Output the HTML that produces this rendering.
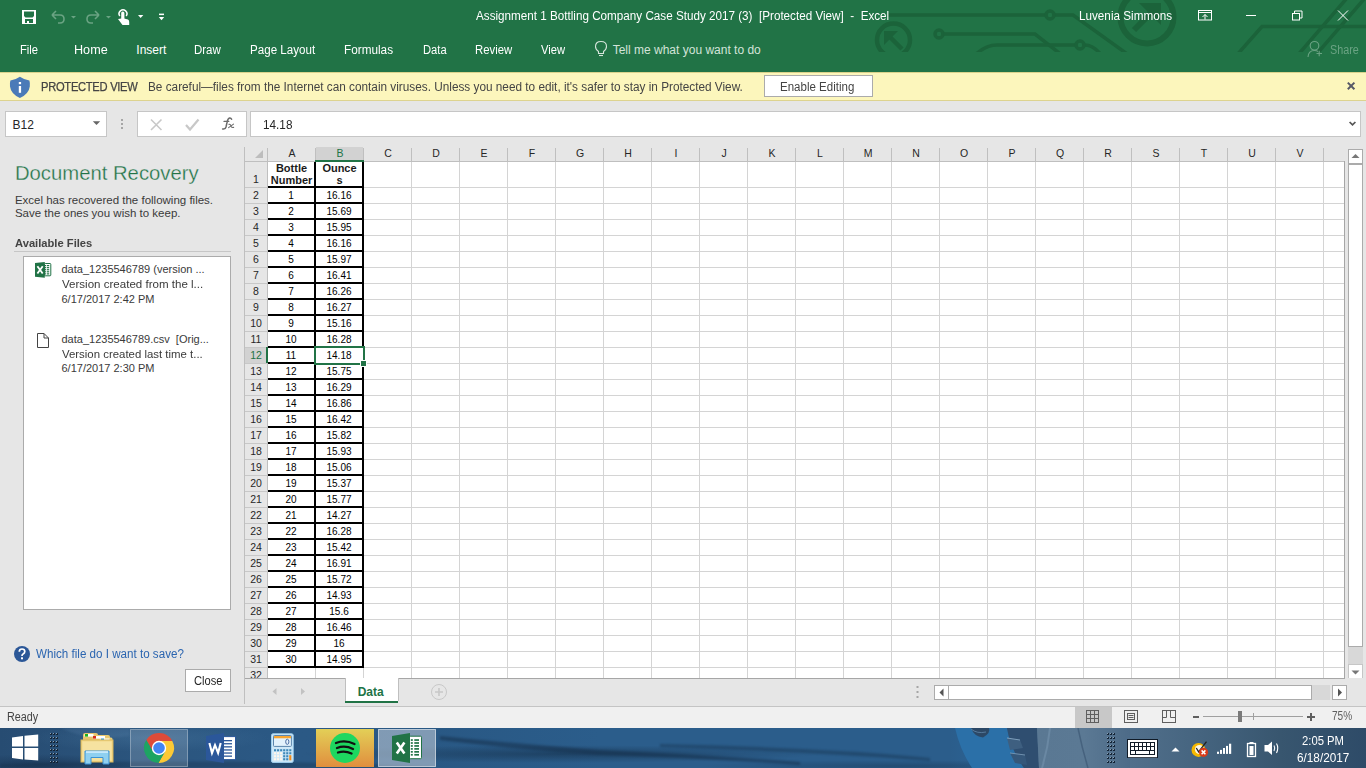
<!DOCTYPE html>
<html><head><meta charset="utf-8"><style>
html,body{margin:0;padding:0;width:1366px;height:768px;overflow:hidden;background:#e6e6e6;position:relative;font-family:"Liberation Sans",sans-serif}
.t{position:absolute;white-space:pre;line-height:1;font-family:"Liberation Sans",sans-serif}
.hc{position:absolute;width:40px;height:14px;text-align:center;font-size:10.5px;line-height:15px}
.hr{position:absolute;left:245px;width:22px;text-align:center;font-size:10.5px;line-height:11px}
.cv{position:absolute;width:46px;height:15px;text-align:center;font-size:10px;line-height:15px;color:#000}
.cb{position:absolute;width:47px;height:26px;text-align:center;font-size:11px;line-height:12.8px;font-weight:bold;color:#1a1a1a}
</style></head><body>
<div style="position:absolute;left:0;top:0;width:1366px;height:72px;background:#217346"></div>
<svg style="position:absolute;left:0;top:0" width="1366" height="52">
<g stroke="#1b633a" stroke-width="3.5" fill="none">
<path d="M888 15 H1045.5 M1054.5 15 H1073 L1130 56"/>
<circle cx="1050" cy="15" r="4"/>
<circle cx="893.5" cy="40" r="16.5" stroke-width="4.5"/>
<path d="M889 36 L902 49" stroke-width="4.5"/>
<path d="M884 31 H898 L884 45 Z" fill="#1b633a" stroke="none"/>
<circle cx="939" cy="34" r="4"/>
<path d="M943.5 34 H1035 L1063 56"/>
<path d="M974 56 Q985 45 997 45 H1075.5 M1084.5 45 Q1094 45 1102 56"/>
<circle cx="1080" cy="45" r="4"/>
<circle cx="1147" cy="17" r="26.5" stroke-width="6"/>
<path d="M1134 30 L1154 10" stroke-width="6"/>
<path d="M1139 3 H1161 V25 Z" fill="#1b633a" stroke="none"/>
<path d="M1236 56 L1262 26.5 H1366"/>
<path d="M1297 56 L1347 -2 M1315 56 L1365 -2"/>
</g></svg>
<svg style="position:absolute;left:0;top:0" width="180" height="32">
<path d="M22 10 H36 V24 H22 Z M24 11.5 V16 L25.5 17.5 H32.5 L34 16 V11.5 Z M25 19 V23 H27 V21 H29 V23 H33 V19 Z" fill="#fff" fill-rule="evenodd"/>
<g fill="none" stroke="#6aa383" stroke-width="1.6">
<path d="M52 15 L56 11 M52 15 L56 19 M52 15 H60 Q64 15 64 19 Q64 23 60 23 H58"/>
<path d="M99 15 L95 11 M99 15 L95 19 M99 15 H91 Q87 15 87 19 Q87 23 91 23 H93"/>
</g>
<path d="M71 16 H76 L73.5 18.5 Z" fill="#6aa383"/>
<path d="M106 16 H111 L108.5 18.5 Z" fill="#6aa383"/>
<g fill="#fff">
<path d="M119.8 16 A3.9 3.9 0 1 1 126.2 16" fill="none" stroke="#fff" stroke-width="1.5"/>
<rect x="121.2" y="11.6" width="3.2" height="10" rx="1.5"/>
<path d="M118 19 L121.5 18.5 L124 18.5 L128 19.5 Q129.3 20.2 129.2 22 V25 H122.5 Z"/>
<path d="M138 15 H143.3 L140.65 18 Z"/>
<rect x="159" y="13.6" width="5" height="1.5"/>
<path d="M158.8 17 H164.2 L161.5 20.2 Z"/>
</g></svg>
<div class="t" style="left:475.5px;top:9.54px;font-size:12px;color:#fff;font-weight:normal;transform:scaleX(0.973);transform-origin:0 0;">Assignment 1 Bottling Company Case Study 2017 (3)&nbsp; [Protected View]&nbsp; -&nbsp; Excel</div>
<div class="t" style="left:1078.5px;top:9.74px;font-size:12px;color:#fff;font-weight:normal;transform:scaleX(0.975);transform-origin:0 0;">Luvenia Simmons</div>
<svg style="position:absolute;left:1180;top:0" width="186" height="32">
<g fill="none" stroke="#fff" stroke-width="1">
<rect x="18.5" y="10.5" width="13" height="9.5"/>
<path d="M18.5 12.5 H31.5"/>
<path d="M25 19.5 V14.5 M22.5 17 L25 14.5 L27.5 17"/>
<path d="M66 15.5 H76"/>
<rect x="112.5" y="13.5" width="7" height="6.5"/>
<path d="M114.5 13.5 V11 H122 V18 H119.5"/>
<path d="M158 10.5 L168 20.5 M168 10.5 L158 20.5"/>
</g></svg>
<div class="t" style="left:20.4px;top:44.04px;font-size:12px;color:#fff;font-weight:normal;transform:scaleX(0.937);transform-origin:0 0;">File</div>
<div class="t" style="left:74.4px;top:44.04px;font-size:12px;color:#fff;font-weight:normal;transform:scaleX(1.052);transform-origin:0 0;">Home</div>
<div class="t" style="left:136.3px;top:44.04px;font-size:12px;color:#fff;font-weight:normal;">Insert</div>
<div class="t" style="left:194.3px;top:44.04px;font-size:12px;color:#fff;font-weight:normal;transform:scaleX(0.954);transform-origin:0 0;">Draw</div>
<div class="t" style="left:250.3px;top:44.04px;font-size:12px;color:#fff;font-weight:normal;transform:scaleX(0.966);transform-origin:0 0;">Page Layout</div>
<div class="t" style="left:344px;top:44.04px;font-size:12px;color:#fff;font-weight:normal;transform:scaleX(0.98);transform-origin:0 0;">Formulas</div>
<div class="t" style="left:422.5px;top:44.04px;font-size:12px;color:#fff;font-weight:normal;transform:scaleX(0.932);transform-origin:0 0;">Data</div>
<div class="t" style="left:475.2px;top:44.04px;font-size:12px;color:#fff;font-weight:normal;transform:scaleX(0.944);transform-origin:0 0;">Review</div>
<div class="t" style="left:540.8px;top:44.04px;font-size:12px;color:#fff;font-weight:normal;transform:scaleX(0.933);transform-origin:0 0;">View</div>
<svg style="position:absolute;left:590px;top:40px" width="20" height="20">
<g fill="none" stroke="#d6e6dc" stroke-width="1.1">
<path d="M8.5 13.5 V11.5 Q5.5 9.5 5.5 6.5 Q5.5 1.5 11 1.5 Q16.5 1.5 16.5 6.5 Q16.5 9.5 13.5 11.5 V13.5 Z"/>
<path d="M9 15.5 H13"/>
</g></svg>
<div class="t" style="left:612.7px;top:44.04px;font-size:12px;color:#d3e3d9;font-weight:normal;">Tell me what you want to do</div>
<svg style="position:absolute;left:1296px;top:36px" width="30" height="26">
<g fill="none" stroke="#6aa383" stroke-width="1.1">
<circle cx="18.5" cy="9.8" r="4.3"/>
<path d="M12 21 Q12.5 14.5 18.5 14.5 Q20.5 14.5 22 15.5"/>
<path d="M20.5 17.5 H26 M23.2 14.8 V20.2"/>
</g></svg>
<div class="t" style="left:1330px;top:44.04px;font-size:12px;color:#6aa383;font-weight:normal;transform:scaleX(0.9);transform-origin:0 0;">Share</div>
<div style="position:absolute;left:0;top:72px;width:1366px;height:28px;background:#fcf6bc;border-bottom:1px solid #ddd38f"></div>
<svg style="position:absolute;left:8px;top:75px" width="26" height="24">
<path d="M11.9 1.8 Q16 4.8 21.4 5.4 Q22.2 8 21.8 11.5 Q20.8 19.2 11.9 22.9 Q3 19.2 2 11.5 Q1.6 8 2.4 5.4 Q7.8 4.8 11.9 1.8 Z" fill="#4a7ab8"/>
<rect x="10.8" y="7" width="2.3" height="2.2" fill="#fff"/>
<rect x="10.8" y="11" width="2.3" height="6.8" fill="#fff"/>
</svg>
<div class="t" style="left:40.5px;top:80.94px;font-size:12px;color:#444;font-weight:normal;transform:scaleX(0.93);transform-origin:0 0;letter-spacing:-0.3px;-webkit-text-stroke:0.25px #444;">PROTECTED VIEW</div>
<div class="t" style="left:147.5px;top:80.94px;font-size:12px;color:#444;font-weight:normal;transform:scaleX(0.982);transform-origin:0 0;">Be careful—files from the Internet can contain viruses. Unless you need to edit, it's safer to stay in Protected View.</div>
<div style="position:absolute;left:764px;top:75px;width:107px;height:20px;background:#fff;border:1px solid #ababab"></div>
<div class="t" style="left:780.2px;top:80.94px;font-size:12px;color:#444;font-weight:normal;transform:scaleX(0.96);transform-origin:0 0;">Enable Editing</div>
<svg style="position:absolute;left:1343px;top:79px" width="14" height="14">
<path d="M4.8 3.6 L11.4 10.2 M11.4 3.6 L4.8 10.2" stroke="#565866" stroke-width="2"/></svg>
<div style="position:absolute;left:0;top:72px;width:1366px;height:1px;background:#d9d28c"></div>
<div style="position:absolute;left:0;top:101px;width:1366px;height:46px;background:#e6e6e6"></div>
<div style="position:absolute;left:5px;top:111px;width:100px;height:24px;background:#fff;border:1px solid #c6c6c6"></div>
<div class="t" style="left:12.5px;top:118.84px;font-size:12px;color:#262626;font-weight:normal;">B12</div>
<svg style="position:absolute;left:90px;top:118px" width="14" height="10"><path d="M2.8 3.2 H10.2 L6.5 6.9 Z" fill="#666"/></svg>
<svg style="position:absolute;left:119px;top:117px" width="6" height="14"><g fill="#a6a6a6"><rect x="2" y="2" width="2" height="2"/><rect x="2" y="6" width="2" height="2"/><rect x="2" y="10" width="2" height="2"/></g></svg>
<div style="position:absolute;left:137px;top:111px;width:108px;height:24px;background:#fff;border:1px solid #c6c6c6"></div>
<svg style="position:absolute;left:137px;top:111px" width="110" height="26">
<path d="M14 8.5 L24.5 19 M24.5 8.5 L14 19" stroke="#c8c8c8" stroke-width="1.6"/>
<path d="M49 14 L53 18.5 L61.5 8.5" stroke="#c8c8c8" stroke-width="2.2" fill="none"/>
</svg>
<svg style="position:absolute;left:218px;top:114px" width="20" height="20">
<g fill="none" stroke="#6b6b6b" stroke-linecap="round">
<path d="M13.6 5.2 Q13 3.8 11.6 4 Q9.8 4.4 9 8.5 L8 13 Q7.3 15.6 4.6 15" stroke-width="1.5"/>
<path d="M6 7.4 H10.8" stroke-width="1.2"/>
<path d="M11 10.3 Q12.3 10 12.8 11.4 L13.3 12.8 Q13.8 13.7 15.6 13.4" stroke-width="1.2"/>
<path d="M15.5 10.1 L10.6 13.6" stroke-width="1.1"/>
</g></svg>
<div style="position:absolute;left:250px;top:111px;width:1109px;height:24px;background:#fff;border:1px solid #c6c6c6"></div>
<div class="t" style="left:262.5px;top:118.84px;font-size:12px;color:#262626;font-weight:normal;transform:scaleX(0.98);transform-origin:0 0;">14.18</div>
<svg style="position:absolute;left:1344px;top:117px" width="14" height="12"><path d="M5.6 5 L8.5 7.9 L11.4 5" stroke="#555" stroke-width="1.7" fill="none"/></svg>
<div style="position:absolute;left:0;top:147px;width:244px;height:559px;background:#e6e6e6"></div>
<div class="t" style="left:14.9px;top:163.42px;font-size:20.3px;color:#217346;font-weight:normal;-webkit-text-stroke:0.3px #e6e6e6;">Document Recovery</div>
<div class="t" style="left:14.9px;top:195.47px;font-size:11.5px;color:#3a3a3a;font-weight:normal;">Excel has recovered the following files.</div>
<div class="t" style="left:14.9px;top:208.47px;font-size:11.5px;color:#3a3a3a;font-weight:normal;">Save the ones you wish to keep.</div>
<div class="t" style="left:14.9px;top:238.03px;font-size:11.3px;color:#444;font-weight:bold;transform:scaleX(0.99);transform-origin:0 0;">Available Files</div>
<div style="position:absolute;left:14px;top:251px;width:217px;height:1px;background:#c6c6c6"></div>
<div style="position:absolute;left:23px;top:256px;width:206px;height:352px;background:#fff;border:1px solid #ababab"></div>
<svg style="position:absolute;left:34px;top:261px" width="18" height="18">
<rect x="10.5" y="2.5" width="6.3" height="12.3" rx="0.8" fill="#fff" stroke="#217346" stroke-width="1"/>
<g fill="#217346"><rect x="11" y="4.00" width="1.2" height="1.2"/><rect x="13" y="4.00" width="2.2" height="1.2"/><rect x="11" y="6.07" width="1.2" height="1.2"/><rect x="13" y="6.07" width="2.2" height="1.2"/><rect x="11" y="8.14" width="1.2" height="1.2"/><rect x="13" y="8.14" width="2.2" height="1.2"/><rect x="11" y="10.21" width="1.2" height="1.2"/><rect x="13" y="10.21" width="2.2" height="1.2"/><rect x="11" y="12.28" width="1.2" height="1.2"/><rect x="13" y="12.28" width="2.2" height="1.2"/></g>
<path d="M1 2 L10.8 1 V16.8 L1 15.75 Z" fill="#217346"/>
<path d="M3.4 5.2 L8.7 12.6 M8.7 5.2 L3.4 12.6" stroke="#fff" stroke-width="1.8"/>
</svg>
<div class="t" style="left:61.5px;top:263.99px;font-size:11px;color:#3a3a3a;font-weight:normal;">data_1235546789 (version ...</div>
<div class="t" style="left:61.5px;top:278.79px;font-size:11px;color:#3a3a3a;font-weight:normal;transform:scaleX(1.05);transform-origin:0 0;">Version created from the l...</div>
<div class="t" style="left:61.5px;top:293.69px;font-size:11px;color:#3a3a3a;font-weight:normal;">6/17/2017 2:42 PM</div>
<svg style="position:absolute;left:35px;top:331px" width="16" height="18">
<path d="M2.5 2.5 H9 L13.5 7 V16.5 H2.5 Z M9 2.5 V7 H13.5" fill="#fff" stroke="#444" stroke-width="1"/></svg>
<div class="t" style="left:61.5px;top:333.89px;font-size:11px;color:#3a3a3a;font-weight:normal;">data_1235546789.csv&nbsp; [Orig...</div>
<div class="t" style="left:61.5px;top:348.79px;font-size:11px;color:#3a3a3a;font-weight:normal;transform:scaleX(1.037);transform-origin:0 0;">Version created last time t...</div>
<div class="t" style="left:61.5px;top:363.39px;font-size:11px;color:#3a3a3a;font-weight:normal;">6/17/2017 2:30 PM</div>
<svg style="position:absolute;left:13px;top:645px" width="18" height="18">
<circle cx="9" cy="9" r="8" fill="#2b5797"/>
<path d="M6.3 6.8 Q6.3 4 9 4 Q11.8 4 11.8 6.6 Q11.8 8.3 9.8 9.2 Q9 9.6 9 11" stroke="#fff" stroke-width="1.7" fill="none"/>
<rect x="8" y="12.3" width="2" height="2" fill="#fff"/>
</svg>
<div class="t" style="left:36.2px;top:647.94px;font-size:12px;color:#2b65b0;font-weight:normal;transform:scaleX(0.968);transform-origin:0 0;">Which file do I want to save?</div>
<div style="position:absolute;left:185px;top:669px;width:44px;height:21px;background:#fff;border:1px solid #ababab"></div>
<div class="t" style="left:194.4px;top:674.84px;font-size:12px;color:#262626;font-weight:normal;transform:scaleX(0.93);transform-origin:0 0;">Close</div>
<div style="position:absolute;left:244px;top:147px;width:1101px;height:531px;background:#fff"></div>
<div style="position:absolute;left:244px;top:147px;width:1101px;height:14px;background:#e6e6e6"></div>
<div style="position:absolute;left:244px;top:147px;width:23px;height:531px;background:#e6e6e6"></div>
<div style="position:absolute;left:316px;top:147px;width:47px;height:14px;background:#d2d2d2"></div>
<div style="position:absolute;left:245px;top:348px;width:22px;height:15px;background:#d2d2d2"></div>
<svg style="position:absolute;left:0;top:0" width="1366" height="768"><rect x="267" y="161" width="1" height="517" fill="#bfbfbf"/><rect x="267" y="148" width="1" height="13" fill="#bfbfbf"/><rect x="315" y="161" width="1" height="517" fill="#d4d4d4"/><rect x="315" y="148" width="1" height="13" fill="#bfbfbf"/><rect x="363" y="161" width="1" height="517" fill="#d4d4d4"/><rect x="363" y="148" width="1" height="13" fill="#bfbfbf"/><rect x="411" y="161" width="1" height="517" fill="#d4d4d4"/><rect x="411" y="148" width="1" height="13" fill="#bfbfbf"/><rect x="459" y="161" width="1" height="517" fill="#d4d4d4"/><rect x="459" y="148" width="1" height="13" fill="#bfbfbf"/><rect x="507" y="161" width="1" height="517" fill="#d4d4d4"/><rect x="507" y="148" width="1" height="13" fill="#bfbfbf"/><rect x="555" y="161" width="1" height="517" fill="#d4d4d4"/><rect x="555" y="148" width="1" height="13" fill="#bfbfbf"/><rect x="603" y="161" width="1" height="517" fill="#d4d4d4"/><rect x="603" y="148" width="1" height="13" fill="#bfbfbf"/><rect x="651" y="161" width="1" height="517" fill="#d4d4d4"/><rect x="651" y="148" width="1" height="13" fill="#bfbfbf"/><rect x="699" y="161" width="1" height="517" fill="#d4d4d4"/><rect x="699" y="148" width="1" height="13" fill="#bfbfbf"/><rect x="747" y="161" width="1" height="517" fill="#d4d4d4"/><rect x="747" y="148" width="1" height="13" fill="#bfbfbf"/><rect x="795" y="161" width="1" height="517" fill="#d4d4d4"/><rect x="795" y="148" width="1" height="13" fill="#bfbfbf"/><rect x="843" y="161" width="1" height="517" fill="#d4d4d4"/><rect x="843" y="148" width="1" height="13" fill="#bfbfbf"/><rect x="891" y="161" width="1" height="517" fill="#d4d4d4"/><rect x="891" y="148" width="1" height="13" fill="#bfbfbf"/><rect x="939" y="161" width="1" height="517" fill="#d4d4d4"/><rect x="939" y="148" width="1" height="13" fill="#bfbfbf"/><rect x="987" y="161" width="1" height="517" fill="#d4d4d4"/><rect x="987" y="148" width="1" height="13" fill="#bfbfbf"/><rect x="1035" y="161" width="1" height="517" fill="#d4d4d4"/><rect x="1035" y="148" width="1" height="13" fill="#bfbfbf"/><rect x="1083" y="161" width="1" height="517" fill="#d4d4d4"/><rect x="1083" y="148" width="1" height="13" fill="#bfbfbf"/><rect x="1131" y="161" width="1" height="517" fill="#d4d4d4"/><rect x="1131" y="148" width="1" height="13" fill="#bfbfbf"/><rect x="1179" y="161" width="1" height="517" fill="#d4d4d4"/><rect x="1179" y="148" width="1" height="13" fill="#bfbfbf"/><rect x="1227" y="161" width="1" height="517" fill="#d4d4d4"/><rect x="1227" y="148" width="1" height="13" fill="#bfbfbf"/><rect x="1275" y="161" width="1" height="517" fill="#d4d4d4"/><rect x="1275" y="148" width="1" height="13" fill="#bfbfbf"/><rect x="1323" y="161" width="1" height="517" fill="#d4d4d4"/><rect x="1323" y="148" width="1" height="13" fill="#bfbfbf"/><rect x="244" y="147" width="1" height="557" fill="#bfbfbf"/><rect x="244" y="161" width="1101" height="1" fill="#bfbfbf"/><rect x="268" y="187" width="1077" height="1" fill="#d4d4d4"/><rect x="245" y="187" width="22" height="1" fill="#c8c8c8"/><rect x="268" y="203" width="1077" height="1" fill="#d4d4d4"/><rect x="245" y="203" width="22" height="1" fill="#c8c8c8"/><rect x="268" y="219" width="1077" height="1" fill="#d4d4d4"/><rect x="245" y="219" width="22" height="1" fill="#c8c8c8"/><rect x="268" y="235" width="1077" height="1" fill="#d4d4d4"/><rect x="245" y="235" width="22" height="1" fill="#c8c8c8"/><rect x="268" y="251" width="1077" height="1" fill="#d4d4d4"/><rect x="245" y="251" width="22" height="1" fill="#c8c8c8"/><rect x="268" y="267" width="1077" height="1" fill="#d4d4d4"/><rect x="245" y="267" width="22" height="1" fill="#c8c8c8"/><rect x="268" y="283" width="1077" height="1" fill="#d4d4d4"/><rect x="245" y="283" width="22" height="1" fill="#c8c8c8"/><rect x="268" y="299" width="1077" height="1" fill="#d4d4d4"/><rect x="245" y="299" width="22" height="1" fill="#c8c8c8"/><rect x="268" y="315" width="1077" height="1" fill="#d4d4d4"/><rect x="245" y="315" width="22" height="1" fill="#c8c8c8"/><rect x="268" y="331" width="1077" height="1" fill="#d4d4d4"/><rect x="245" y="331" width="22" height="1" fill="#c8c8c8"/><rect x="268" y="347" width="1077" height="1" fill="#d4d4d4"/><rect x="245" y="347" width="22" height="1" fill="#c8c8c8"/><rect x="268" y="363" width="1077" height="1" fill="#d4d4d4"/><rect x="245" y="363" width="22" height="1" fill="#c8c8c8"/><rect x="268" y="379" width="1077" height="1" fill="#d4d4d4"/><rect x="245" y="379" width="22" height="1" fill="#c8c8c8"/><rect x="268" y="395" width="1077" height="1" fill="#d4d4d4"/><rect x="245" y="395" width="22" height="1" fill="#c8c8c8"/><rect x="268" y="411" width="1077" height="1" fill="#d4d4d4"/><rect x="245" y="411" width="22" height="1" fill="#c8c8c8"/><rect x="268" y="427" width="1077" height="1" fill="#d4d4d4"/><rect x="245" y="427" width="22" height="1" fill="#c8c8c8"/><rect x="268" y="443" width="1077" height="1" fill="#d4d4d4"/><rect x="245" y="443" width="22" height="1" fill="#c8c8c8"/><rect x="268" y="459" width="1077" height="1" fill="#d4d4d4"/><rect x="245" y="459" width="22" height="1" fill="#c8c8c8"/><rect x="268" y="475" width="1077" height="1" fill="#d4d4d4"/><rect x="245" y="475" width="22" height="1" fill="#c8c8c8"/><rect x="268" y="491" width="1077" height="1" fill="#d4d4d4"/><rect x="245" y="491" width="22" height="1" fill="#c8c8c8"/><rect x="268" y="507" width="1077" height="1" fill="#d4d4d4"/><rect x="245" y="507" width="22" height="1" fill="#c8c8c8"/><rect x="268" y="523" width="1077" height="1" fill="#d4d4d4"/><rect x="245" y="523" width="22" height="1" fill="#c8c8c8"/><rect x="268" y="539" width="1077" height="1" fill="#d4d4d4"/><rect x="245" y="539" width="22" height="1" fill="#c8c8c8"/><rect x="268" y="555" width="1077" height="1" fill="#d4d4d4"/><rect x="245" y="555" width="22" height="1" fill="#c8c8c8"/><rect x="268" y="571" width="1077" height="1" fill="#d4d4d4"/><rect x="245" y="571" width="22" height="1" fill="#c8c8c8"/><rect x="268" y="587" width="1077" height="1" fill="#d4d4d4"/><rect x="245" y="587" width="22" height="1" fill="#c8c8c8"/><rect x="268" y="603" width="1077" height="1" fill="#d4d4d4"/><rect x="245" y="603" width="22" height="1" fill="#c8c8c8"/><rect x="268" y="619" width="1077" height="1" fill="#d4d4d4"/><rect x="245" y="619" width="22" height="1" fill="#c8c8c8"/><rect x="268" y="635" width="1077" height="1" fill="#d4d4d4"/><rect x="245" y="635" width="22" height="1" fill="#c8c8c8"/><rect x="268" y="651" width="1077" height="1" fill="#d4d4d4"/><rect x="245" y="651" width="22" height="1" fill="#c8c8c8"/><rect x="268" y="667" width="1077" height="1" fill="#d4d4d4"/><rect x="245" y="667" width="22" height="1" fill="#c8c8c8"/><rect x="268" y="683" width="1077" height="1" fill="#d4d4d4"/><rect x="245" y="683" width="22" height="1" fill="#c8c8c8"/><path d="M263 150 V158 H255 Z" fill="#bdbdbd"/><rect x="268" y="186" width="96" height="2" fill="#000"/><rect x="268" y="202" width="96" height="2" fill="#000"/><rect x="268" y="218" width="96" height="2" fill="#000"/><rect x="268" y="234" width="96" height="2" fill="#000"/><rect x="268" y="250" width="96" height="2" fill="#000"/><rect x="268" y="266" width="96" height="2" fill="#000"/><rect x="268" y="282" width="96" height="2" fill="#000"/><rect x="268" y="298" width="96" height="2" fill="#000"/><rect x="268" y="314" width="96" height="2" fill="#000"/><rect x="268" y="330" width="96" height="2" fill="#000"/><rect x="268" y="346" width="96" height="2" fill="#000"/><rect x="268" y="362" width="96" height="2" fill="#000"/><rect x="268" y="378" width="96" height="2" fill="#000"/><rect x="268" y="394" width="96" height="2" fill="#000"/><rect x="268" y="410" width="96" height="2" fill="#000"/><rect x="268" y="426" width="96" height="2" fill="#000"/><rect x="268" y="442" width="96" height="2" fill="#000"/><rect x="268" y="458" width="96" height="2" fill="#000"/><rect x="268" y="474" width="96" height="2" fill="#000"/><rect x="268" y="490" width="96" height="2" fill="#000"/><rect x="268" y="506" width="96" height="2" fill="#000"/><rect x="268" y="522" width="96" height="2" fill="#000"/><rect x="268" y="538" width="96" height="2" fill="#000"/><rect x="268" y="554" width="96" height="2" fill="#000"/><rect x="268" y="570" width="96" height="2" fill="#000"/><rect x="268" y="586" width="96" height="2" fill="#000"/><rect x="268" y="602" width="96" height="2" fill="#000"/><rect x="268" y="618" width="96" height="2" fill="#000"/><rect x="268" y="634" width="96" height="2" fill="#000"/><rect x="268" y="650" width="96" height="2" fill="#000"/><rect x="268" y="666" width="96" height="2" fill="#000"/><rect x="314" y="162" width="2" height="506" fill="#000"/><rect x="362" y="162" width="2" height="506" fill="#000"/><rect x="316" y="348" width="47" height="15" fill="#fff"/><rect x="314" y="346" width="51" height="2" fill="#217346"/><rect x="314" y="346" width="2" height="19" fill="#217346"/><rect x="314" y="363" width="46" height="2" fill="#217346"/><rect x="363" y="346" width="2" height="14" fill="#217346"/><rect x="360" y="360" width="7" height="7" fill="#fff"/><rect x="361" y="361" width="5" height="5" fill="#217346"/><rect x="266" y="347" width="2" height="16" fill="#217346"/><rect x="315" y="160" width="49" height="2" fill="#217346"/><rect x="1345" y="161" width="1" height="517" fill="#bfbfbf"/></svg>
<div class="hc" style="left:272.0px;top:146px;color:#262626">A</div>
<div class="hc" style="left:320.0px;top:146px;color:#217346">B</div>
<div class="hc" style="left:368.0px;top:146px;color:#262626">C</div>
<div class="hc" style="left:416.0px;top:146px;color:#262626">D</div>
<div class="hc" style="left:464.0px;top:146px;color:#262626">E</div>
<div class="hc" style="left:512.0px;top:146px;color:#262626">F</div>
<div class="hc" style="left:560.0px;top:146px;color:#262626">G</div>
<div class="hc" style="left:608.0px;top:146px;color:#262626">H</div>
<div class="hc" style="left:656.0px;top:146px;color:#262626">I</div>
<div class="hc" style="left:704.0px;top:146px;color:#262626">J</div>
<div class="hc" style="left:752.0px;top:146px;color:#262626">K</div>
<div class="hc" style="left:800.0px;top:146px;color:#262626">L</div>
<div class="hc" style="left:848.0px;top:146px;color:#262626">M</div>
<div class="hc" style="left:896.0px;top:146px;color:#262626">N</div>
<div class="hc" style="left:944.0px;top:146px;color:#262626">O</div>
<div class="hc" style="left:992.0px;top:146px;color:#262626">P</div>
<div class="hc" style="left:1040.0px;top:146px;color:#262626">Q</div>
<div class="hc" style="left:1088.0px;top:146px;color:#262626">R</div>
<div class="hc" style="left:1136.0px;top:146px;color:#262626">S</div>
<div class="hc" style="left:1184.0px;top:146px;color:#262626">T</div>
<div class="hc" style="left:1232.0px;top:146px;color:#262626">U</div>
<div class="hc" style="left:1280.0px;top:146px;color:#262626">V</div>
<div class="hr" style="top:174.0px;color:#262626">1</div>
<div class="hr" style="top:190.0px;color:#262626">2</div>
<div class="hr" style="top:206.0px;color:#262626">3</div>
<div class="hr" style="top:222.0px;color:#262626">4</div>
<div class="hr" style="top:238.0px;color:#262626">5</div>
<div class="hr" style="top:254.0px;color:#262626">6</div>
<div class="hr" style="top:270.0px;color:#262626">7</div>
<div class="hr" style="top:286.0px;color:#262626">8</div>
<div class="hr" style="top:302.0px;color:#262626">9</div>
<div class="hr" style="top:318.0px;color:#262626">10</div>
<div class="hr" style="top:334.0px;color:#262626">11</div>
<div class="hr" style="top:350.0px;color:#217346">12</div>
<div class="hr" style="top:366.0px;color:#262626">13</div>
<div class="hr" style="top:382.0px;color:#262626">14</div>
<div class="hr" style="top:398.0px;color:#262626">15</div>
<div class="hr" style="top:414.0px;color:#262626">16</div>
<div class="hr" style="top:430.0px;color:#262626">17</div>
<div class="hr" style="top:446.0px;color:#262626">18</div>
<div class="hr" style="top:462.0px;color:#262626">19</div>
<div class="hr" style="top:478.0px;color:#262626">20</div>
<div class="hr" style="top:494.0px;color:#262626">21</div>
<div class="hr" style="top:510.0px;color:#262626">22</div>
<div class="hr" style="top:526.0px;color:#262626">23</div>
<div class="hr" style="top:542.0px;color:#262626">24</div>
<div class="hr" style="top:558.0px;color:#262626">25</div>
<div class="hr" style="top:574.0px;color:#262626">26</div>
<div class="hr" style="top:590.0px;color:#262626">27</div>
<div class="hr" style="top:606.0px;color:#262626">28</div>
<div class="hr" style="top:622.0px;color:#262626">29</div>
<div class="hr" style="top:638.0px;color:#262626">30</div>
<div class="hr" style="top:654.0px;color:#262626">31</div>
<div class="hr" style="top:670.0px;color:#262626">32</div>
<div class="cb" style="left:268px;top:161.5px">Bottle<br>Number</div>
<div class="cb" style="left:316px;top:161.5px">Ounce<br>s</div>
<div class="cv" style="left:268px;top:188px">1</div>
<div class="cv" style="left:316px;top:188px">16.16</div>
<div class="cv" style="left:268px;top:204px">2</div>
<div class="cv" style="left:316px;top:204px">15.69</div>
<div class="cv" style="left:268px;top:220px">3</div>
<div class="cv" style="left:316px;top:220px">15.95</div>
<div class="cv" style="left:268px;top:236px">4</div>
<div class="cv" style="left:316px;top:236px">16.16</div>
<div class="cv" style="left:268px;top:252px">5</div>
<div class="cv" style="left:316px;top:252px">15.97</div>
<div class="cv" style="left:268px;top:268px">6</div>
<div class="cv" style="left:316px;top:268px">16.41</div>
<div class="cv" style="left:268px;top:284px">7</div>
<div class="cv" style="left:316px;top:284px">16.26</div>
<div class="cv" style="left:268px;top:300px">8</div>
<div class="cv" style="left:316px;top:300px">16.27</div>
<div class="cv" style="left:268px;top:316px">9</div>
<div class="cv" style="left:316px;top:316px">15.16</div>
<div class="cv" style="left:268px;top:332px">10</div>
<div class="cv" style="left:316px;top:332px">16.28</div>
<div class="cv" style="left:268px;top:348px">11</div>
<div class="cv" style="left:316px;top:348px">14.18</div>
<div class="cv" style="left:268px;top:364px">12</div>
<div class="cv" style="left:316px;top:364px">15.75</div>
<div class="cv" style="left:268px;top:380px">13</div>
<div class="cv" style="left:316px;top:380px">16.29</div>
<div class="cv" style="left:268px;top:396px">14</div>
<div class="cv" style="left:316px;top:396px">16.86</div>
<div class="cv" style="left:268px;top:412px">15</div>
<div class="cv" style="left:316px;top:412px">16.42</div>
<div class="cv" style="left:268px;top:428px">16</div>
<div class="cv" style="left:316px;top:428px">15.82</div>
<div class="cv" style="left:268px;top:444px">17</div>
<div class="cv" style="left:316px;top:444px">15.93</div>
<div class="cv" style="left:268px;top:460px">18</div>
<div class="cv" style="left:316px;top:460px">15.06</div>
<div class="cv" style="left:268px;top:476px">19</div>
<div class="cv" style="left:316px;top:476px">15.37</div>
<div class="cv" style="left:268px;top:492px">20</div>
<div class="cv" style="left:316px;top:492px">15.77</div>
<div class="cv" style="left:268px;top:508px">21</div>
<div class="cv" style="left:316px;top:508px">14.27</div>
<div class="cv" style="left:268px;top:524px">22</div>
<div class="cv" style="left:316px;top:524px">16.28</div>
<div class="cv" style="left:268px;top:540px">23</div>
<div class="cv" style="left:316px;top:540px">15.42</div>
<div class="cv" style="left:268px;top:556px">24</div>
<div class="cv" style="left:316px;top:556px">16.91</div>
<div class="cv" style="left:268px;top:572px">25</div>
<div class="cv" style="left:316px;top:572px">15.72</div>
<div class="cv" style="left:268px;top:588px">26</div>
<div class="cv" style="left:316px;top:588px">14.93</div>
<div class="cv" style="left:268px;top:604px">27</div>
<div class="cv" style="left:316px;top:604px">15.6</div>
<div class="cv" style="left:268px;top:620px">28</div>
<div class="cv" style="left:316px;top:620px">16.46</div>
<div class="cv" style="left:268px;top:636px">29</div>
<div class="cv" style="left:316px;top:636px">16</div>
<div class="cv" style="left:268px;top:652px">30</div>
<div class="cv" style="left:316px;top:652px">14.95</div>
<div style="position:absolute;left:1345px;top:147px;width:21px;height:531px;background:#e6e6e6"></div>
<div style="position:absolute;left:1348px;top:149px;width:13px;height:13px;background:#fff;border:1px solid #ababab"></div>
<svg style="position:absolute;left:1348px;top:149px" width="15" height="16"><path d="M3.5 9 H11.5 L7.5 5 Z" fill="#777"/></svg>
<div style="position:absolute;left:1348px;top:164px;width:13px;height:481px;background:#fff;border:1px solid #ababab"></div>
<div style="position:absolute;left:1344px;top:161px;width:1px;height:517px;background:#a6a6a6"></div>
<div style="position:absolute;left:1348px;top:647px;width:15px;height:17px;background:#d8d8d8"></div>
<div style="position:absolute;left:1348px;top:664px;width:13px;height:13px;background:#fff;border:1px solid #c6c6c6"></div>
<svg style="position:absolute;left:1348px;top:664px" width="15" height="16"><path d="M3.5 6.5 H11.5 L7.5 10.5 Z" fill="#777"/></svg>
<div style="position:absolute;left:244px;top:678px;width:1122px;height:28px;background:#e6e6e6"></div>
<div style="position:absolute;left:244px;top:678px;width:1101px;height:1px;background:#a6a6a6"></div>
<div style="position:absolute;left:244px;top:678px;width:1px;height:26px;background:#bfbfbf"></div>
<div style="position:absolute;left:345px;top:678px;width:52px;height:23px;background:#fff;border-left:1px solid #bfbfbf;border-right:1px solid #bfbfbf"></div>
<div style="position:absolute;left:345px;top:701px;width:53px;height:2px;background:#217346"></div>
<div class="t" style="left:357.7px;top:685.54px;font-size:12px;color:#217346;font-weight:bold;">Data</div>
<svg style="position:absolute;left:265px;top:682px" width="190" height="22">
<path d="M11.5 6 V13 L7.5 9.5 Z" fill="#c2c2c2"/>
<path d="M36 6 V13 L40 9.5 Z" fill="#c2c2c2"/>
<circle cx="174" cy="10" r="7.5" fill="none" stroke="#c8c8c8" stroke-width="1"/>
<path d="M174 6 V14 M170 10 H178" stroke="#c8c8c8" stroke-width="1.6"/>
</svg>
<svg style="position:absolute;left:914px;top:684px" width="8" height="16"><g fill="#a6a6a6"><rect x="2.5" y="2" width="2" height="2"/><rect x="2.5" y="7" width="2" height="2"/><rect x="2.5" y="12" width="2" height="2"/></g></svg>
<div style="position:absolute;left:934px;top:685px;width:14px;height:13px;background:#fff;border:1px solid #ababab"></div>
<svg style="position:absolute;left:934px;top:685px" width="16" height="15"><path d="M9.5 3.5 V11.5 L5.5 7.5 Z" fill="#555"/></svg>
<div style="position:absolute;left:948px;top:685px;width:362px;height:13px;background:#fff;border:1px solid #ababab"></div>
<div style="position:absolute;left:1312px;top:685px;width:18px;height:15px;background:#d8d8d8"></div>
<div style="position:absolute;left:1332px;top:685px;width:13px;height:13px;background:#fff;border:1px solid #ababab"></div>
<svg style="position:absolute;left:1332px;top:685px" width="16" height="15"><path d="M6 3.5 V11.5 L10 7.5 Z" fill="#555"/></svg>
<div style="position:absolute;left:0;top:706px;width:1366px;height:22px;background:#f0f0f0;border-top:1px solid #c4c4c4"></div>
<div class="t" style="left:7.3px;top:711.14px;font-size:12px;color:#444;font-weight:normal;transform:scaleX(0.9);transform-origin:0 0;">Ready</div>
<div style="position:absolute;left:1075px;top:707px;width:37px;height:21px;background:#c8c8c8"></div>
<svg style="position:absolute;left:1080px;top:706px" width="286" height="22">
<g fill="none" stroke="#5f5f5f" stroke-width="1">
<rect x="6.5" y="4.5" width="12" height="12"/>
<path d="M10.5 4.5 V16.5 M14.5 4.5 V16.5 M6.5 8.5 H18.5 M6.5 12.5 H18.5"/>
<rect x="44.5" y="4.5" width="13" height="12"/>
<rect x="47.5" y="7.5" width="7" height="6"/>
<path d="M48.5 9.5 H53.5 M48.5 11.5 H53.5"/>
<rect x="82.5" y="4.5" width="13" height="12"/>
<path d="M82.5 11.5 H86.5 V4.5 M90.5 4.5 V11.5 H95.5"/>
</g>
<rect x="113" y="10" width="6" height="2" fill="#5f5f5f"/>
<rect x="123" y="10" width="100" height="1" fill="#a0a0a0"/>
<rect x="158" y="5" width="4" height="11" fill="#7a7a7a"/>
<rect x="173" y="7" width="1" height="7" fill="#a0a0a0"/>
<path d="M227 11 H235 M231 7 V15" stroke="#5f5f5f" stroke-width="2"/>
</svg>
<div class="t" style="left:1331.5px;top:710.44px;font-size:12px;color:#5f5f5f;font-weight:normal;transform:scaleX(0.84);transform-origin:0 0;">75%</div>
<div style="position:absolute;left:0;top:728px;width:1366px;height:40px;background:
radial-gradient(ellipse 260px 9px at 560px 26px, rgba(20,45,70,0.55), rgba(20,45,70,0) 100%),
radial-gradient(ellipse 200px 6px at 900px 38px, rgba(20,45,70,0.35), rgba(20,45,70,0) 100%),
radial-gradient(ellipse 120px 14px at 150px 10px, rgba(90,140,180,0.25), rgba(90,140,180,0) 100%),
radial-gradient(ellipse 90px 10px at 40px 36px, rgba(15,35,60,0.4), rgba(15,35,60,0) 100%),
linear-gradient(90deg,#274c72 0px,#2b557e 150px,#2b5985 300px,#295884 430px,#2b5d8b 600px,#2b5d8b 950px,#2b6598 1000px,#4a6a8a 1040px,#5a7893 1075px,#53718d 1120px,#45647f 1200px,#38566f 1280px,#2e4b68 1366px)"></div>
<svg style="position:absolute;left:0;top:728px;filter:blur(1.2px)" width="930" height="40">
<path d="M440 8 Q520 16 600 22 Q700 26 800 34 L800 37 Q700 30 600 27 Q520 22 440 12 Z" fill="rgba(18,40,64,0.45)"/>
<path d="M660 16 Q760 18 860 24 Q900 27 930 30 L930 33 Q880 29 840 27 Q760 22 660 19 Z" fill="rgba(18,40,64,0.35)"/>
<path d="M0 36 Q200 30 430 38 L430 40 L0 40 Z" fill="rgba(18,40,64,0.3)"/>
<path d="M60 0 Q90 14 130 8 L130 0 Z" fill="rgba(120,160,200,0.15)"/>
</svg>
<svg style="position:absolute;left:930px;top:728px;filter:blur(0.6px)" width="200" height="40">
<defs><linearGradient id="rockg" x1="0" y1="0" x2="1" y2="0"><stop offset="0" stop-color="#5a7893"/><stop offset="0.5" stop-color="#5b7994"/><stop offset="1" stop-color="#4d6b88"/></linearGradient></defs>
<path d="M25 0 H77 Q80 20 94 40 H42 Q30 22 25 0 Z" fill="#2b70a8"/>
<path d="M77 0 H107 L109 40 H94 Q80 20 77 0 Z" fill="#2f4e70"/>
<path d="M41 0 H59 Q61 5 53 9.5 Q44 8.5 41 0 Z" fill="#2c4866"/>
<path d="M41 1 Q47 6 56 4" stroke="#5f86aa" stroke-width="0.8" fill="none"/>
<path d="M77 10 L90 12 L93 20 L80 22 Z" fill="#3e5f80"/>
<path d="M77 10 L90 12" stroke="#8fb0cc" stroke-width="0.8"/>
<path d="M80 25 L95 27 L97 37 L85 35 Z" fill="#35577a"/>
<path d="M80 25 L95 27" stroke="#7fa0bd" stroke-width="0.8"/>
<path d="M107 0 H200 V40 H109 Z" fill="url(#rockg)"/>
<path d="M148 0 Q152 20 158 40" stroke="#46627e" stroke-width="1.5" fill="none"/>
<path d="M120 0 Q118 20 112 40" stroke="#6a88a3" stroke-width="2" fill="none"/>
</svg>
<svg style="position:absolute;left:0;top:728px" width="1366" height="40">
<g fill="#fff">
<path d="M12 9.4 L23 8 V18.6 H12 Z M24.5 7.8 L38.2 6.4 V18.6 H24.5 Z M12 20 H23 V31.4 L12 30 Z M24.5 20 H38.2 V32.4 L24.5 31.4 Z"/>
</g>
<g fill="#111"><rect x="50" y="5" width="2" height="2" fill="#142436"/><rect x="50" y="5" width="1" height="1" fill="#8aa0b4"/><rect x="50" y="9" width="2" height="2" fill="#142436"/><rect x="50" y="9" width="1" height="1" fill="#8aa0b4"/><rect x="50" y="13" width="2" height="2" fill="#142436"/><rect x="50" y="13" width="1" height="1" fill="#8aa0b4"/><rect x="50" y="17" width="2" height="2" fill="#142436"/><rect x="50" y="17" width="1" height="1" fill="#8aa0b4"/><rect x="50" y="21" width="2" height="2" fill="#142436"/><rect x="50" y="21" width="1" height="1" fill="#8aa0b4"/><rect x="50" y="25" width="2" height="2" fill="#142436"/><rect x="50" y="25" width="1" height="1" fill="#8aa0b4"/><rect x="50" y="29" width="2" height="2" fill="#142436"/><rect x="50" y="29" width="1" height="1" fill="#8aa0b4"/><rect x="50" y="33" width="2" height="2" fill="#142436"/><rect x="50" y="33" width="1" height="1" fill="#8aa0b4"/><rect x="53" y="5" width="2" height="2" fill="#142436"/><rect x="53" y="5" width="1" height="1" fill="#8aa0b4"/><rect x="53" y="9" width="2" height="2" fill="#142436"/><rect x="53" y="9" width="1" height="1" fill="#8aa0b4"/><rect x="53" y="13" width="2" height="2" fill="#142436"/><rect x="53" y="13" width="1" height="1" fill="#8aa0b4"/><rect x="53" y="17" width="2" height="2" fill="#142436"/><rect x="53" y="17" width="1" height="1" fill="#8aa0b4"/><rect x="53" y="21" width="2" height="2" fill="#142436"/><rect x="53" y="21" width="1" height="1" fill="#8aa0b4"/><rect x="53" y="25" width="2" height="2" fill="#142436"/><rect x="53" y="25" width="1" height="1" fill="#8aa0b4"/><rect x="53" y="29" width="2" height="2" fill="#142436"/><rect x="53" y="29" width="1" height="1" fill="#8aa0b4"/><rect x="53" y="33" width="2" height="2" fill="#142436"/><rect x="53" y="33" width="1" height="1" fill="#8aa0b4"/><rect x="56" y="5" width="2" height="2" fill="#142436"/><rect x="56" y="5" width="1" height="1" fill="#8aa0b4"/><rect x="56" y="9" width="2" height="2" fill="#142436"/><rect x="56" y="9" width="1" height="1" fill="#8aa0b4"/><rect x="56" y="13" width="2" height="2" fill="#142436"/><rect x="56" y="13" width="1" height="1" fill="#8aa0b4"/><rect x="56" y="17" width="2" height="2" fill="#142436"/><rect x="56" y="17" width="1" height="1" fill="#8aa0b4"/><rect x="56" y="21" width="2" height="2" fill="#142436"/><rect x="56" y="21" width="1" height="1" fill="#8aa0b4"/><rect x="56" y="25" width="2" height="2" fill="#142436"/><rect x="56" y="25" width="1" height="1" fill="#8aa0b4"/><rect x="56" y="29" width="2" height="2" fill="#142436"/><rect x="56" y="29" width="1" height="1" fill="#8aa0b4"/><rect x="56" y="33" width="2" height="2" fill="#142436"/><rect x="56" y="33" width="1" height="1" fill="#8aa0b4"/><rect x="1107" y="5" width="2" height="2" fill="#142436"/><rect x="1107" y="5" width="1" height="1" fill="#8aa0b4"/><rect x="1107" y="9" width="2" height="2" fill="#142436"/><rect x="1107" y="9" width="1" height="1" fill="#8aa0b4"/><rect x="1107" y="13" width="2" height="2" fill="#142436"/><rect x="1107" y="13" width="1" height="1" fill="#8aa0b4"/><rect x="1107" y="17" width="2" height="2" fill="#142436"/><rect x="1107" y="17" width="1" height="1" fill="#8aa0b4"/><rect x="1107" y="21" width="2" height="2" fill="#142436"/><rect x="1107" y="21" width="1" height="1" fill="#8aa0b4"/><rect x="1107" y="25" width="2" height="2" fill="#142436"/><rect x="1107" y="25" width="1" height="1" fill="#8aa0b4"/><rect x="1107" y="29" width="2" height="2" fill="#142436"/><rect x="1107" y="29" width="1" height="1" fill="#8aa0b4"/><rect x="1107" y="33" width="2" height="2" fill="#142436"/><rect x="1107" y="33" width="1" height="1" fill="#8aa0b4"/><rect x="1110" y="5" width="2" height="2" fill="#142436"/><rect x="1110" y="5" width="1" height="1" fill="#8aa0b4"/><rect x="1110" y="9" width="2" height="2" fill="#142436"/><rect x="1110" y="9" width="1" height="1" fill="#8aa0b4"/><rect x="1110" y="13" width="2" height="2" fill="#142436"/><rect x="1110" y="13" width="1" height="1" fill="#8aa0b4"/><rect x="1110" y="17" width="2" height="2" fill="#142436"/><rect x="1110" y="17" width="1" height="1" fill="#8aa0b4"/><rect x="1110" y="21" width="2" height="2" fill="#142436"/><rect x="1110" y="21" width="1" height="1" fill="#8aa0b4"/><rect x="1110" y="25" width="2" height="2" fill="#142436"/><rect x="1110" y="25" width="1" height="1" fill="#8aa0b4"/><rect x="1110" y="29" width="2" height="2" fill="#142436"/><rect x="1110" y="29" width="1" height="1" fill="#8aa0b4"/><rect x="1110" y="33" width="2" height="2" fill="#142436"/><rect x="1110" y="33" width="1" height="1" fill="#8aa0b4"/><rect x="1113" y="5" width="2" height="2" fill="#142436"/><rect x="1113" y="5" width="1" height="1" fill="#8aa0b4"/><rect x="1113" y="9" width="2" height="2" fill="#142436"/><rect x="1113" y="9" width="1" height="1" fill="#8aa0b4"/><rect x="1113" y="13" width="2" height="2" fill="#142436"/><rect x="1113" y="13" width="1" height="1" fill="#8aa0b4"/><rect x="1113" y="17" width="2" height="2" fill="#142436"/><rect x="1113" y="17" width="1" height="1" fill="#8aa0b4"/><rect x="1113" y="21" width="2" height="2" fill="#142436"/><rect x="1113" y="21" width="1" height="1" fill="#8aa0b4"/><rect x="1113" y="25" width="2" height="2" fill="#142436"/><rect x="1113" y="25" width="1" height="1" fill="#8aa0b4"/><rect x="1113" y="29" width="2" height="2" fill="#142436"/><rect x="1113" y="29" width="1" height="1" fill="#8aa0b4"/><rect x="1113" y="33" width="2" height="2" fill="#142436"/><rect x="1113" y="33" width="1" height="1" fill="#8aa0b4"/></g>
<!-- explorer -->
<path d="M83 12 V7 Q83 5 85 5 H96 Q98 5 98 7 V12 Z" fill="#e6c46c"/>
<path d="M92 12 V9 Q92 7 94 7 H108 Q110 7 110 9 V13 Z" fill="#e9c96f"/>
<path d="M99 14 V11 Q99 9.5 101 9.5 H111 Q112.5 9.5 112.5 11 V14 Z" fill="#ecd078"/>
<rect x="84.5" y="6" width="9" height="2.6" fill="#fff"/><rect x="85" y="6" width="3" height="2.6" fill="#1db21d"/>
<rect x="93" y="8" width="12" height="2.6" fill="#fff"/><rect x="93" y="8" width="3" height="2.6" fill="#d42a1e"/>
<rect x="100.5" y="10.5" width="9" height="2.6" fill="#fff"/><rect x="101" y="10.5" width="3" height="2.6" fill="#2a9be8"/>
<rect x="81" y="12" width="32" height="22" fill="#f2d888" stroke="#d8b55a" stroke-width="1"/>
<rect x="82.5" y="13.5" width="29" height="19" fill="#f6e2a0"/>
<path d="M85 23 H109 V36 H103 V29.5 H91 V36 H85 Z" fill="#8fd0f0" stroke="#3b93d6" stroke-width="1"/>
<path d="M86 24 H108" stroke="#d8f2ff" stroke-width="1.5"/>
<!-- chrome highlight -->
<rect x="130.5" y="1.5" width="57" height="37" fill="rgba(255,255,255,0.16)" stroke="rgba(255,255,255,0.35)" stroke-width="1"/>
<g>
<path d="M159 13 L172.27 13 A15 15 0 0 0 146.3 12.01 L152.94 23.5 Z" fill="#dd4b39"/>
<path d="M165.06 23.5 L158.43 34.99 A15 15 0 0 0 172.27 13 L159 13 Z" fill="#fcc934"/>
<path d="M152.94 23.5 L146.3 12.01 A15 15 0 0 0 158.43 34.99 L165.06 23.5 Z" fill="#1da462"/>
<circle cx="159" cy="20" r="7.2" fill="#fff"/><circle cx="159" cy="20" r="5.8" fill="#4285f4"/>
</g>
<!-- word -->
<rect x="223.5" y="8.6" width="12" height="23" fill="#fff" stroke="#2b579a" stroke-width="1"/>
<g fill="#2b579a"><rect x="223" y="12.0" width="9" height="1.3"/><rect x="223" y="15.1" width="9" height="1.3"/><rect x="223" y="18.2" width="9" height="1.3"/><rect x="223" y="21.3" width="9" height="1.3"/><rect x="223" y="24.4" width="9" height="1.3"/><rect x="223" y="27.5" width="9" height="1.3"/></g>
<path d="M206 8 L224 5 V35 L206 32 Z" fill="#2b579a"/>
<path d="M209.4 15.1 L212 25 L215 17.2 L218.1 25 L220.7 15.1" stroke="#fff" stroke-width="2.1" fill="none" stroke-linejoin="miter"/>
<!-- calc -->
<rect x="271.5" y="5.8" width="21.7" height="28.6" rx="1.5" fill="#cfe8f8" stroke="#9fd0f0" stroke-width="1"/>
<rect x="273.5" y="7.5" width="17.9" height="10.9" rx="0.8" fill="#e4f2fc" stroke="#5b86ad" stroke-width="1"/>
<rect x="274" y="8" width="17" height="2.3" fill="#f7a532"/>
<ellipse cx="287.3" cy="13.8" rx="1.6" ry="2.6" fill="none" stroke="#3b5f9a" stroke-width="0.9"/>
<rect x="274.00" y="21.20" width="2.1" height="2.1" fill="#3d88b8"/><rect x="277.05" y="21.20" width="2.1" height="2.1" fill="#3d88b8"/><rect x="280.10" y="21.20" width="2.1" height="2.1" fill="#3d88b8"/><rect x="283.15" y="21.20" width="2.1" height="2.1" fill="#3d88b8"/><rect x="286.20" y="21.20" width="2.1" height="2.1" fill="#3d88b8"/><rect x="289.25" y="21.20" width="2.1" height="2.1" fill="#3d88b8"/><rect x="274.00" y="24.20" width="2.1" height="2.1" fill="#fff6ea"/><rect x="277.05" y="24.20" width="2.1" height="2.1" fill="#fff6ea"/><rect x="280.10" y="24.20" width="2.1" height="2.1" fill="#fff6ea"/><rect x="283.15" y="24.20" width="2.1" height="2.1" fill="#3d88b8"/><rect x="286.20" y="24.20" width="2.1" height="2.1" fill="#3d88b8"/><rect x="289.25" y="24.20" width="2.1" height="2.1" fill="#3d88b8"/><rect x="274.00" y="27.20" width="2.1" height="2.1" fill="#fff6ea"/><rect x="277.05" y="27.20" width="2.1" height="2.1" fill="#fff6ea"/><rect x="280.10" y="27.20" width="2.1" height="2.1" fill="#fff6ea"/><rect x="283.15" y="27.20" width="2.1" height="2.1" fill="#3d88b8"/><rect x="286.20" y="27.20" width="2.1" height="2.1" fill="#3d88b8"/><rect x="274.00" y="30.20" width="2.1" height="2.1" fill="#fff6ea"/><rect x="277.05" y="30.20" width="2.1" height="2.1" fill="#fff6ea"/><rect x="280.10" y="30.20" width="2.1" height="2.1" fill="#fff6ea"/><rect x="283.15" y="30.20" width="2.1" height="2.1" fill="#3d88b8"/><rect x="286.20" y="30.20" width="2.1" height="2.1" fill="#3d88b8"/>
<rect x="289.25" y="27.2" width="2.1" height="5.1" fill="#f08a1c"/>
<!-- spotify box -->
<defs><linearGradient id="sg" x1="0" y1="0" x2="0" y2="1"><stop offset="0" stop-color="#e3cf57"/><stop offset="1" stop-color="#e08e3e"/></linearGradient></defs>
<rect x="316" y="1" width="58" height="38" fill="url(#sg)"/>
<circle cx="345" cy="20" r="15" fill="#1ed760"/>
<g fill="none" stroke="#111" stroke-width="2.3" stroke-linecap="round">
<path d="M336 15 Q345 11.5 354.5 16"/>
<path d="M337 20 Q345 17 353 21"/>
<path d="M338 24.5 Q345 22.5 351.5 25.5"/>
</g>
<!-- excel box -->
<rect x="378.5" y="1.5" width="57" height="37" fill="rgba(200,210,220,0.55)" stroke="rgba(255,255,255,0.6)" stroke-width="1"/>
<rect x="409.5" y="8.2" width="12" height="22.5" rx="1" fill="#fff" stroke="#217346" stroke-width="1"/>
<g fill="#217346"><rect x="410.8" y="11.20" width="2" height="1.7"/><rect x="414.3" y="11.20" width="4.7" height="1.7"/><rect x="410.8" y="14.15" width="2" height="1.7"/><rect x="414.3" y="14.15" width="4.7" height="1.7"/><rect x="410.8" y="17.10" width="2" height="1.7"/><rect x="414.3" y="17.10" width="4.7" height="1.7"/><rect x="410.8" y="20.05" width="2" height="1.7"/><rect x="414.3" y="20.05" width="4.7" height="1.7"/><rect x="410.8" y="23.00" width="2" height="1.7"/><rect x="414.3" y="23.00" width="4.7" height="1.7"/><rect x="410.8" y="25.95" width="2" height="1.7"/><rect x="414.3" y="25.95" width="4.7" height="1.7"/></g>
<path d="M392 8 L410 5 V35 L392 32 Z" fill="#217346"/>
<path d="M396.8 14.5 L404.4 25.6 M404.4 14.5 L396.8 25.6" stroke="#fff" stroke-width="2.6"/>
<!-- tray -->
<rect x="1127" y="11" width="31" height="19" fill="#101a26"/>
<rect x="1128" y="12" width="29" height="17.2" fill="#fff"/>
<rect x="1130" y="14" width="25" height="13" fill="#101a26"/>
<g fill="#fff"><rect x="1131" y="15" width="3" height="3"/><rect x="1135" y="15" width="3" height="3"/><rect x="1139" y="15" width="3" height="3"/><rect x="1143" y="15" width="3" height="3"/><rect x="1147" y="15" width="3" height="3"/><rect x="1151" y="15" width="3" height="3"/><rect x="1131" y="19" width="3" height="3"/><rect x="1135" y="19" width="3" height="3"/><rect x="1139" y="19" width="3" height="3"/><rect x="1143" y="19" width="3" height="3"/><rect x="1147" y="19" width="3" height="3"/><rect x="1151" y="19" width="3" height="3"/>
<rect x="1131" y="23" width="4" height="3"/><rect x="1136" y="23" width="13" height="3"/><rect x="1150" y="23" width="4" height="3"/>
<path d="M1171.5 23.5 H1179.5 L1175.5 19.5 Z"/>
<rect x="1217" y="23.7" width="2" height="2.2"/><rect x="1220" y="21.9" width="2" height="4"/><rect x="1223" y="20" width="2" height="5.9"/><rect x="1226" y="17.9" width="2" height="8"/><rect x="1229" y="15.7" width="2.2" height="10.2"/>
</g>
<circle cx="1198.5" cy="21.9" r="7" fill="#f5b800"/>
<circle cx="1199.5" cy="21.5" r="4.6" fill="#fbf6e8"/>
<path d="M1196.3 20 L1198.6 23.8 L1206.5 13.6" stroke="#222" stroke-width="1.3" fill="none"/>
<circle cx="1203.5" cy="24.3" r="4.6" fill="#d93a1a"/>
<path d="M1201.6 22.4 L1205.4 26.2 M1205.4 22.4 L1201.6 26.2" stroke="#fff" stroke-width="1.5"/>
<rect x="1247.5" y="15.5" width="8" height="13" fill="none" stroke="#fff" stroke-width="1.3"/>
<rect x="1249.5" y="18" width="4" height="9" fill="#fff"/>
<rect x="1249.5" y="14" width="4" height="1.5" fill="#fff"/>
<path d="M1264.5 17 H1268 L1272 13.5 V27 L1268 23.5 H1264.5 Z" fill="#fff"/>
<path d="M1274 17.5 Q1275.5 20 1274 23 M1276.5 15.5 Q1279 20 1276.5 25" stroke="#fff" stroke-width="1.1" fill="none"/>
</svg>
<div class="t" style="left:1301.8px;top:735.04px;font-size:12px;color:#fff;font-weight:normal;transform:scaleX(0.94);transform-origin:0 0;">2:05 PM</div>
<div class="t" style="left:1296.7px;top:751.84px;font-size:12px;color:#fff;font-weight:normal;transform:scaleX(0.98);transform-origin:0 0;">6/18/2017</div>
</body></html>
